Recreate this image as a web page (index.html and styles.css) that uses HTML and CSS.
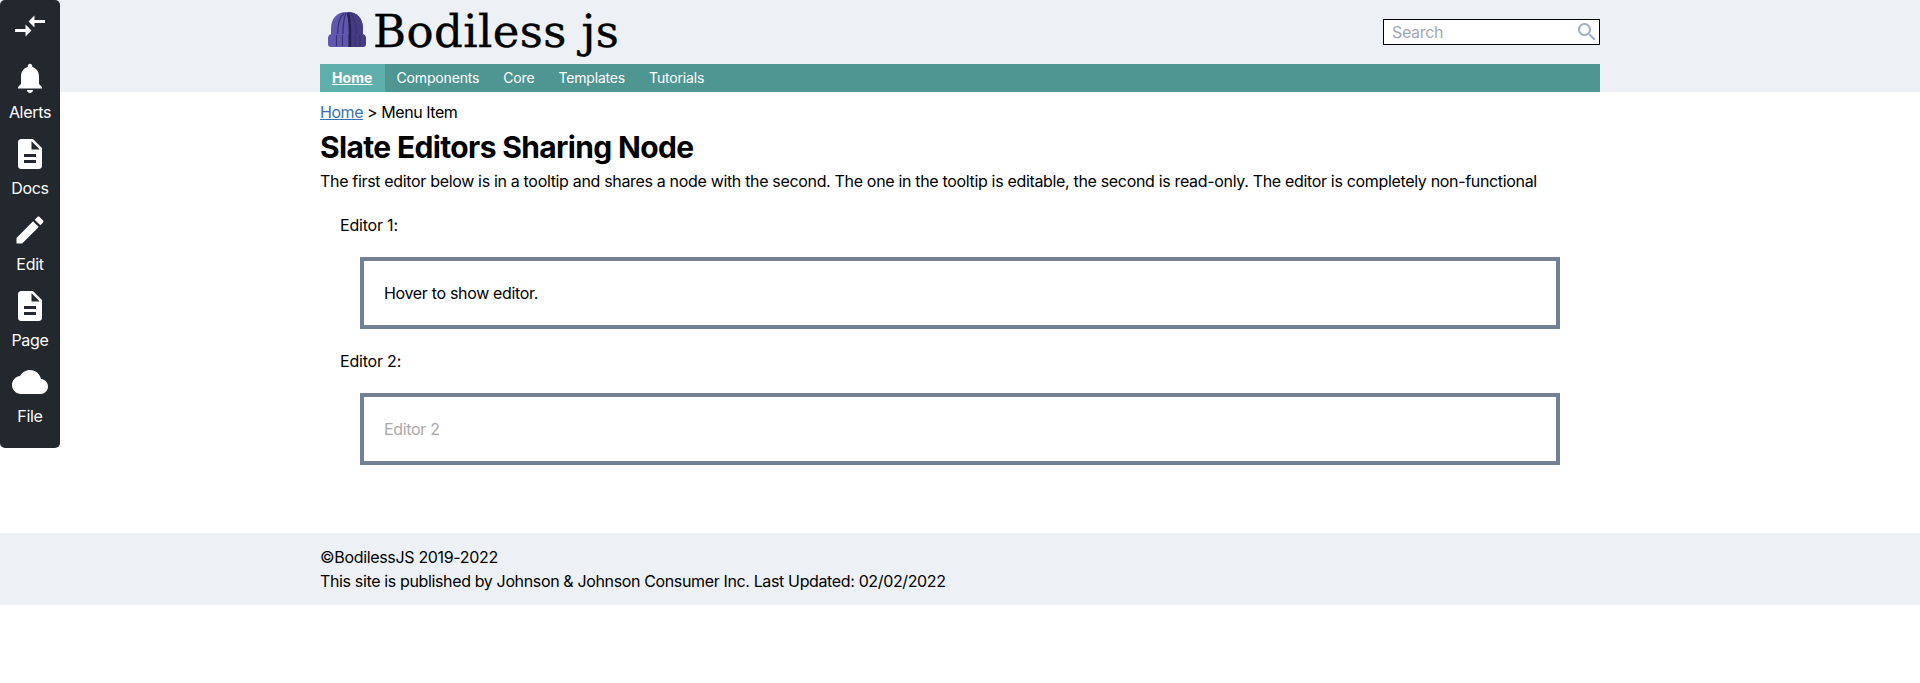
FILE: index.html
```html
<!DOCTYPE html>
<html lang="en">
<head>
<meta charset="utf-8">
<title>Slate Editors Sharing Node</title>
<link rel="stylesheet" href="styles.css">
</head>
<body>
<aside class="toolbar">
  <a class="tool switch"><svg viewBox="0 0 24 24"><path d="M9.01 14H2v2h7.01v3L13 15l-3.99-4v3zm5.98-1v-3H22V8h-7.01V5L11 9l3.99 4z"/></svg></a>
  <a class="tool"><svg viewBox="0 0 24 24"><path d="M12 22c1.1 0 2-.9 2-2h-4c0 1.1.89 2 2 2zm6-6v-5c0-3.07-1.64-5.64-4.5-6.32V4c0-.83-.67-1.5-1.5-1.5s-1.5.67-1.5 1.5v.68C7.63 5.36 6 7.92 6 11v5l-2 2v1h16v-1l-2-2z"/></svg><span>Alerts</span></a>
  <a class="tool"><svg viewBox="0 0 24 24"><path d="M14 2H6c-1.1 0-1.99.9-1.99 2L4 20c0 1.1.89 2 1.99 2H18c1.1 0 2-.9 2-2V8l-6-6zm2 16H8v-2h8v2zm0-4H8v-2h8v2zm-3-5V3.500L18.500 9H13z"/></svg><span>Docs</span></a>
  <a class="tool"><svg viewBox="0 0 24 24"><path d="M3 17.250V21h3.750L17.810 9.940l-3.750-3.750L3 17.250zM20.710 7.040c.39-.39.39-1.020 0-1.410l-2.340-2.340c-.39-.39-1.020-.39-1.410 0l-1.830 1.830 3.750 3.750 1.830-1.830z"/></svg><span>Edit</span></a>
  <a class="tool"><svg viewBox="0 0 24 24"><path d="M14 2H6c-1.1 0-1.99.9-1.99 2L4 20c0 1.1.89 2 1.99 2H18c1.1 0 2-.9 2-2V8l-6-6zm2 16H8v-2h8v2zm0-4H8v-2h8v2zm-3-5V3.500L18.500 9H13z"/></svg><span>Page</span></a>
  <a class="tool"><svg viewBox="0 0 24 24"><path d="M19.350 10.040C18.670 6.590 15.640 4 12 4 9.110 4 6.600 5.640 5.350 8.040 2.340 8.360 0 10.910 0 14c0 3.310 2.690 6 6 6h13c2.760 0 5-2.240 5-5 0-2.640-2.050-4.780-4.650-4.960z"/></svg><span>File</span></a>
</aside>
<header class="header">
  <div class="container">
    <div class="masthead">
      <a class="logo">
        <svg class="hat" viewBox="0 0 38 36">
          <path fill="#6058ae" d="M3 24V18C3 7 9 1 19 1s16 6 16 17v6z"/>
          <path fill="#453c84" d="M20 1c9 0 15 6 15 17v6H22z"/>
          <path fill="none" stroke="#3a326f" stroke-width="1.300" d="M9.500 24c0-11 2-18 6.500-22M15 24c0-11 1-18 3-22M28.500 24c0-11-2-18-6.500-22"/>
          <path fill="none" stroke="#27214f" stroke-width="2.500" d="M22 24c0-11-1-18-2-22"/>
          <path fill="#6058ae" d="M3 23h18v13H3q-3 0-3-3v-6q0-3 3-4z"/>
          <path fill="#453c84" d="M20 23h15q3 1 3 4v6q0 3-3 3H20z"/>
          <path fill="none" stroke="#3a326f" stroke-width="1.200" d="M8.500 24v11M14.500 24v11M27 24v11M32 24v11"/>
          <path stroke="#27214f" stroke-width="2.500" d="M22 23v13"/>
        </svg>
        <span class="wordmark">Bodiless js</span>
      </a>
      <div class="search"><span>Search</span><svg viewBox="0 0 24 24"><path d="M15.500 14h-.79l-.28-.27C15.410 12.590 16 11.110 16 9.500 16 5.910 13.090 3 9.500 3S3 5.910 3 9.500 5.910 16 9.500 16c1.610 0 3.090-.59 4.230-1.570l.27.28v.79l5 4.990L20.490 19l-4.990-5zm-6 0C7.010 14 5 11.990 5 9.500S7.010 5 9.500 5 14 7.010 14 9.500 11.990 14 9.500 14z"/></svg></div>
    </div>
    <nav class="nav"><a class="active">Home</a><a>Components</a><a>Core</a><a>Templates</a><a>Tutorials</a></nav>
  </div>
</header>
<main class="container main">
  <div class="crumbs"><a>Home</a> &gt; Menu Item</div>
  <h1>Slate Editors Sharing Node</h1>
  <p class="intro">The first editor below is in a tooltip and shares a node with the second. The one in the tooltip is editable, the second is read-only. The editor is completely non-functional</p>
  <section class="editors">
    <div class="label">Editor 1:</div>
    <div class="box">Hover to show editor.</div>
    <div class="label">Editor 2:</div>
    <div class="box placeholder">Editor 2</div>
  </section>
</main>
<footer class="footer">
  <div class="container">
    <div>©BodilessJS 2019-2022</div>
    <div class="published">This site is published by Johnson &amp; Johnson Consumer Inc. Last Updated: 02/02/2022</div>
  </div>
</footer>
</body>
</html>
```
FILE: styles.css
```css
* { box-sizing: border-box; }
body { margin: 0; background: #fff; color: #000; font: 16px/24px Inter, "Liberation Sans", sans-serif; letter-spacing: -0.33px; }
h1, p { margin: 0; }
.container { width: 1280px; margin: 0 auto; }
.toolbar { position: fixed; top: 0; left: 0; width: 60px; height: 448px; padding-top: 8px; background: #23282f; border-radius: 5px; color: #fff; }
.tool { display: flex; flex-direction: column; align-items: center; height: 76px; }
.tool svg { width: 36px; height: 36px; fill: #fff; flex: none; }
.tool span { margin-top: 4px; letter-spacing: -0.3px; }
.tool.switch { height: 52px; }
.header { background: #edf0f5; height: 92px; }
.masthead { display: flex; justify-content: space-between; align-items: center; height: 64px; }
.logo { display: flex; height: 64px; padding-left: 8px; }
.hat { width: 38px; height: 36px; margin-top: 11px; }
.wordmark { margin-left: 7px; font: 45px/64px "DejaVu Serif", serif; letter-spacing: 0.4px; -webkit-text-stroke: 0.4px #000; }
.search { display: flex; justify-content: space-between; align-items: center; width: 217px; height: 26px; border: 1px solid #000; background: #fff; padding-left: 8px; color: #a0a7b4; }
.search svg { width: 24px; height: 24px; fill: #a0aec0; }
.nav { display: flex; height: 28px; background: #4f9592; color: #fff; font-size: 14px; line-height: 28px; letter-spacing: -0.17px; }
.nav a { padding: 0 12px; }
.nav .active { background: #5fb0ac; font-weight: 700; letter-spacing: 0.1px; text-decoration: underline; }
.main { height: 441px; padding-top: 8px; }
.crumbs { letter-spacing: -0.45px; }
.crumbs a { color: #3b70b3; text-decoration: underline; }
h1 { margin-top: 3px; font-size: 30px; line-height: 40px; font-weight: 700; letter-spacing: -0.65px; }
.intro { margin-top: 2px; height: 24px; white-space: nowrap; }
.editors { padding: 20px; }
.label { letter-spacing: -0.2px; }
.box { height: 72px; margin: 20px; padding: 20px; border: 4px solid #748094; }
.placeholder { color: #aaa; }
.footer { height: 72px; padding-top: 12px; background: #edf0f5; }
.published { letter-spacing: -0.36px; }
```
